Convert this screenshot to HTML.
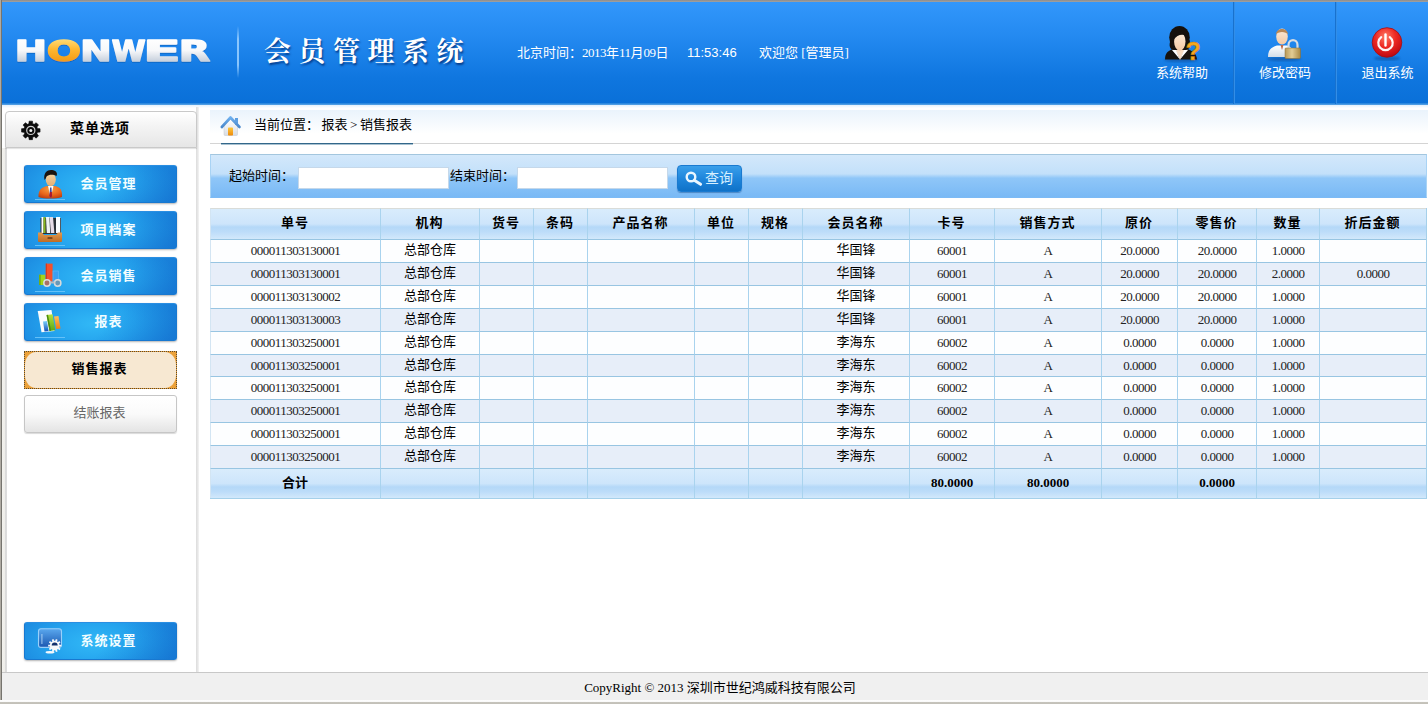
<!DOCTYPE html>
<html lang="zh-CN">
<head>
<meta charset="utf-8">
<title>会员管理系统</title>
<style>
*{box-sizing:border-box;margin:0;padding:0}
html,body{width:1428px;height:704px;overflow:hidden;background:#fff}
body{position:relative;font-family:"Liberation Serif","Noto Sans CJK SC",serif;font-size:13px;color:#000}
.abs{position:absolute}
#frame-t{left:0;top:0;width:1428px;height:2px;background:linear-gradient(#8c8c8c,#a2a2a2)}
#frame-l{left:0;top:0;width:2px;height:700px;background:linear-gradient(90deg,#aeaaa2 0,#aeaaa2 50%,#76746e 50%,#76746e 100%)}
#frame-b{left:0;top:700px;width:1428px;height:4px;background:linear-gradient(#ffffff 0,#fafafa 40%,#c6c4bc 55%,#c2c0b8 100%)}
/* header */
#hdr{left:2px;top:2px;width:1426px;height:102px;background:linear-gradient(#3297fb 0%,#2389f0 35%,#0f76df 75%,#0a70d8 100%)}
#hdr-line{left:2px;top:103px;width:1426px;height:2px;background:linear-gradient(#1e80dc,#5ea6e6)}
#sub{left:2px;top:105px;width:1426px;height:5px;background:linear-gradient(#e3f0fc,#ffffff 60%)}
.hsep{top:2px;width:2px;height:102px;background:linear-gradient(90deg,#0b62c0,#3f9df5)}
.htxt{color:#fff;font-size:13px;white-space:nowrap;line-height:16px}
.hbtn{color:#fff;font-size:13px;text-align:center;white-space:nowrap;line-height:16px;letter-spacing:0}
/* sidebar */
#side-border{left:196px;top:107px;width:3px;height:565px;background:linear-gradient(90deg,#dcdcdc,#e6e6e6 50%,#f4f4f4)}
#menuhead{left:5px;top:111px;width:192px;height:37px;border:1px solid #c9c9c9;border-radius:4px 4px 0 0;background:linear-gradient(#ffffff,#f4f4f4 40%,#e6e6e6 100%);box-shadow:0 1px 1px rgba(0,0,0,.12)}
.mbtn{left:24px;width:153px;height:38px;border-radius:3px;background:linear-gradient(135deg,rgba(16,100,200,0) 55%,rgba(14,90,190,.35) 100%),radial-gradient(ellipse 55% 110% at 45% 55%,#31b8f6 0%,#25a4ee 50%,#1b88df 100%);border:1px solid #1878d0;border-top-color:#2a8ee2;box-shadow:0 1px 2px rgba(0,0,0,.3)}
.mbtn span{position:absolute;left:0;top:0;width:100%;padding-left:16px;text-align:center;color:#f2fdff;font-weight:bold;font-size:13px;line-height:36px;letter-spacing:1px;font-family:"Liberation Serif","Noto Sans CJK SC",serif}
/* footer */
#foot{left:2px;top:672px;width:1426px;height:28px;background:#f0f0f0;border-top:1px solid #c8c8c8;text-align:center;font-size:13px;line-height:30px;padding-left:10px}
/* content */
#crumb{left:210px;top:110px;width:1218px;height:34px;background:linear-gradient(#eaf3fc,#ffffff 70%)}
#crumb-line{left:210px;top:143px;width:1218px;height:1px;background:#d4d4d4}
#crumb-ul{left:221px;top:143px;width:192px;height:2px;background:linear-gradient(#33678a 0,#33678a 50%,#a9c2d1 50%,#a9c2d1 100%)}
#search{left:210px;top:154px;width:1217px;height:44px;border:1px solid #a9d3f4;border-top-color:#a3c6de;border-bottom-color:#7cbaf5;background:linear-gradient(#d3e8fb 0%,#c3e0fa 45%,#8fc6f8 55%,#79b9f5 100%)}
.inp{top:167px;height:22px;width:151px;background:#fff;border:1px solid #c5d8ea}
table{border-collapse:collapse;table-layout:fixed}

#grid{border-collapse:separate;border-spacing:0;table-layout:fixed;border-right:1px solid #a5d0ea;border-bottom:1px solid #a5d0ea}
#grid th,#grid td{border-left:1px solid #a9d3ee;border-top:1px solid #98c5e2;text-align:center;overflow:hidden;white-space:nowrap;padding:0}
#grid th{padding-right:1px;height:31px;font-weight:bold;font-size:13px;letter-spacing:1px;line-height:28px;vertical-align:top;font-family:"Liberation Serif","Noto Sans CJK SC",serif;background:linear-gradient(#d9ecfc 0%,#cde5fb 50%,#b4d8f8 60%,#bcdcf9 75%,#d2e8fb 100%)}
#grid td{height:23px;font-size:12px;line-height:20px;color:#222;vertical-align:top}
#grid td.n{padding-top:1px}
#grid td.c{font-size:13px;line-height:20px;color:#000}
#grid tr.o td{background:#fdfeff}
#grid tr.e td{background:#e7eef9}
#grid tr.tot td{height:30px;font-weight:bold;font-size:13px;line-height:27px;color:#000;background:linear-gradient(#d9ecfc 0%,#cde5fb 50%,#b4d8f8 62%,#bcdcf9 78%,#d2e8fb 100%)}
.d{letter-spacing:-.5px}
#grid td.n{font-size:13px;letter-spacing:-.5px}
#grid tr.s td{height:22px;line-height:19px}
#grid th:first-child,#grid td:first-child{border-left-color:#d3e5f3}
#grid th{border-top-color:#d9dcd9}
</style>
</head>
<body>
<div id="hdr" class="abs"></div>
<div id="hdr-line" class="abs"></div>
<div id="sub" class="abs"></div>
<div id="frame-t" class="abs"></div>
<div id="frame-l" class="abs"></div>
<div id="frame-b" class="abs"></div>


<!-- header -->
<svg class="abs" style="left:10px;top:30px" width="212" height="46" viewBox="0 0 212 46">
  <defs>
    <linearGradient id="lgW" gradientUnits="userSpaceOnUse" x1="0" y1="-22" x2="0" y2="1"><stop offset="0" stop-color="#ffffff"/><stop offset=".5" stop-color="#f7f8fa"/><stop offset="1" stop-color="#c4cedb"/></linearGradient>
    <linearGradient id="lgO" gradientUnits="userSpaceOnUse" x1="0" y1="-22" x2="0" y2="1"><stop offset="0" stop-color="#ffdc78"/><stop offset=".45" stop-color="#fdb730"/><stop offset="1" stop-color="#f29a14"/></linearGradient>
    <filter id="fsh" x="-5%" y="-20%" width="110%" height="150%"><feDropShadow dx="0" dy="1" stdDeviation="0.7" flood-color="#0a4fa0" flood-opacity=".45"/></filter>
  </defs>
  <g filter="url(#fsh)" font-family="'DejaVu Sans','Liberation Sans',sans-serif" font-weight="bold" font-size="28" stroke-linejoin="round">
    <text transform="translate(4.75,31) scale(1.375,1)" x="0" y="0" fill="url(#lgW)" stroke="url(#lgW)" stroke-width="1.4">H</text>
    <text transform="translate(36.86,31) scale(1.441,1)" x="0" y="0" fill="url(#lgO)" stroke="url(#lgO)" stroke-width="1.4">O</text>
    <text transform="translate(70.32,31) scale(1.340,1)" x="0" y="0" fill="url(#lgW)" stroke="url(#lgW)" stroke-width="1.4">N</text>
    <text transform="translate(101.80,31) scale(1.097,1)" x="0" y="0" fill="url(#lgW)" stroke="url(#lgW)" stroke-width="1.4">W</text>
    <text transform="translate(133.30,31) scale(1.950,1)" x="0" y="0" fill="url(#lgW)" stroke="url(#lgW)" stroke-width="1.4">E</text>
    <text transform="translate(168.68,31) scale(1.460,1)" x="0" y="0" fill="url(#lgW)" stroke="url(#lgW)" stroke-width="1.4">R</text>
  </g>
</svg>
<div class="abs" style="left:237px;top:26px;width:2px;height:52px;background:linear-gradient(rgba(120,185,250,0),rgba(150,205,255,.9) 25%,rgba(150,205,255,.9) 75%,rgba(120,185,250,0))"></div>
<div class="abs" id="title" style="left:264px;top:32px;font-family:'Liberation Serif','Noto Serif CJK SC',serif;font-weight:bold;font-size:27px;line-height:40px;letter-spacing:7.500px;color:#fff;text-shadow:1px 2px 2px rgba(0,40,110,.75);white-space:nowrap">会员管理系统</div>
<div class="abs htxt" id="h-time" style="left:517px;top:45px">北京时间：<span class="d">2013</span>年<span class="d">11</span>月<span class="d">09</span>日</div>
<div class="abs htxt" id="h-clock" style="left:687px;top:45px;font-family:'Liberation Sans',sans-serif">11:53:46</div>
<div class="abs htxt" id="h-wel" style="left:759px;top:45px">欢迎您 [管理员]</div>
<div class="abs hsep" style="left:1233px"></div>
<div class="abs hsep" style="left:1335px"></div>
<div class="abs hbtn" id="hb1" style="left:1131px;top:65px;width:102px">系统帮助</div>
<div class="abs hbtn" id="hb2" style="left:1235px;top:65px;width:100px">修改密码</div>
<div class="abs hbtn" id="hb3" style="left:1347px;top:65px;width:81px">退出系统</div>
<div id="side-border" class="abs"></div>
<div class="abs" style="left:2px;top:148px;width:5px;height:524px;background:linear-gradient(90deg,#f2f1ed 0,#efeeea 50%,#d9d9d9 60%,#dedede 100%)"></div>
<div id="menuhead" class="abs"></div>
<div id="foot" class="abs">CopyRight © 2013 深圳市世纪鸿威科技有限公司</div>
<div id="crumb" class="abs"></div>
<div id="crumb-line" class="abs"></div>
<div id="crumb-ul" class="abs"></div>
<div id="search" class="abs"></div>
<!-- sidebar -->
<div class="abs" id="mh-t" style="left:6px;top:111px;width:191px;height:37px;text-align:center;font-weight:bold;font-size:14px;line-height:36px;font-family:'Liberation Serif','Noto Sans CJK SC',serif;padding-right:3px;letter-spacing:1px">菜单选项</div>
<div class="abs mbtn" style="top:165px"><span>会员管理</span></div>
<div class="abs mbtn" style="top:211px"><span>项目档案</span></div>
<div class="abs mbtn" style="top:257px"><span>会员销售</span></div>
<div class="abs mbtn" style="top:303px"><span>报表</span></div>
<div class="abs" id="selbtn" style="left:24px;top:351px;width:153px;height:38px;background:#eba13a;outline:1px dotted #5a4a30;outline-offset:-1px"><div style="position:absolute;left:1px;top:1px;right:1px;bottom:1px;background:#f7e8d2;border-radius:11px/13px"></div><span style="position:absolute;left:0;top:0;width:100%;text-align:center;font-weight:bold;font-size:13px;letter-spacing:1px;line-height:36px;padding-right:2px;font-family:'Liberation Serif','Noto Sans CJK SC',serif">销售报表</span></div>
<div class="abs" id="graybtn" style="left:24px;top:395px;width:153px;height:38px;border:1px solid #c6c6c6;border-radius:3px;background:linear-gradient(#ffffff 0%,#fafafa 50%,#e4e4e4 100%);box-shadow:0 1px 1px rgba(0,0,0,.15);text-align:center;color:#666;font-size:13px;line-height:34px;padding-right:2px">结账报表</div>
<div class="abs mbtn" style="top:622px"><span>系统设置</span></div>

<!-- content -->
<div class="abs" id="cr-t" style="left:254px;top:117px;font-size:13px;line-height:16px;white-space:nowrap;word-spacing:-.7px">当前位置： 报表 &gt; 销售报表</div>
<div class="abs" id="s-l1" style="left:229px;top:168px;font-size:13px;line-height:16px;white-space:nowrap">起始时间：</div>
<div class="abs inp" style="left:298px"></div>
<div class="abs" id="s-l2" style="left:450px;top:168px;font-size:13px;line-height:16px;white-space:nowrap">结束时间：</div>
<div class="abs inp" style="left:517px"></div>
<div class="abs" id="qbtn" style="left:677px;top:165px;width:65px;height:27px;border-radius:4px;background:linear-gradient(#3a9fea 0%,#1f86dc 50%,#0f72c8 100%);border:1px solid #1a7ad0;box-shadow:0 1px 1px rgba(0,60,130,.4)"><span style="position:absolute;left:27px;top:4px;font-size:14px;line-height:18px;color:#d6f0ff;white-space:nowrap;letter-spacing:0">查询</span></div>
<table class="abs" id="grid" style="left:210px;top:208px;width:1217px">
<colgroup><col style="width:170px"><col style="width:99px"><col style="width:54px"><col style="width:54px"><col style="width:107px"><col style="width:54px"><col style="width:54px"><col style="width:107px"><col style="width:85px"><col style="width:107px"><col style="width:76px"><col style="width:79px"><col style="width:63px"><col style="width:107px"></colgroup>
<thead><tr><th>单号</th><th>机构</th><th>货号</th><th>条码</th><th>产品名称</th><th>单位</th><th>规格</th><th>会员名称</th><th>卡号</th><th>销售方式</th><th>原价</th><th>零售价</th><th>数量</th><th>折后金额</th></tr></thead>
<tbody>
<tr class="o"><td class="n">000011303130001</td><td class="c">总部仓库</td><td class="n"></td><td class="n"></td><td class="n"></td><td class="n"></td><td class="n"></td><td class="c">华国锋</td><td class="n">60001</td><td class="n">A</td><td class="n">20.0000</td><td class="n">20.0000</td><td class="n">1.0000</td><td class="n"></td></tr>
<tr class="e"><td class="n">000011303130001</td><td class="c">总部仓库</td><td class="n"></td><td class="n"></td><td class="n"></td><td class="n"></td><td class="n"></td><td class="c">华国锋</td><td class="n">60001</td><td class="n">A</td><td class="n">20.0000</td><td class="n">20.0000</td><td class="n">2.0000</td><td class="n">0.0000</td></tr>
<tr class="o"><td class="n">000011303130002</td><td class="c">总部仓库</td><td class="n"></td><td class="n"></td><td class="n"></td><td class="n"></td><td class="n"></td><td class="c">华国锋</td><td class="n">60001</td><td class="n">A</td><td class="n">20.0000</td><td class="n">20.0000</td><td class="n">1.0000</td><td class="n"></td></tr>
<tr class="e"><td class="n">000011303130003</td><td class="c">总部仓库</td><td class="n"></td><td class="n"></td><td class="n"></td><td class="n"></td><td class="n"></td><td class="c">华国锋</td><td class="n">60001</td><td class="n">A</td><td class="n">20.0000</td><td class="n">20.0000</td><td class="n">1.0000</td><td class="n"></td></tr>
<tr class="o"><td class="n">000011303250001</td><td class="c">总部仓库</td><td class="n"></td><td class="n"></td><td class="n"></td><td class="n"></td><td class="n"></td><td class="c">李海东</td><td class="n">60002</td><td class="n">A</td><td class="n">0.0000</td><td class="n">0.0000</td><td class="n">1.0000</td><td class="n"></td></tr>
<tr class="e s"><td class="n">000011303250001</td><td class="c">总部仓库</td><td class="n"></td><td class="n"></td><td class="n"></td><td class="n"></td><td class="n"></td><td class="c">李海东</td><td class="n">60002</td><td class="n">A</td><td class="n">0.0000</td><td class="n">0.0000</td><td class="n">1.0000</td><td class="n"></td></tr>
<tr class="o"><td class="n">000011303250001</td><td class="c">总部仓库</td><td class="n"></td><td class="n"></td><td class="n"></td><td class="n"></td><td class="n"></td><td class="c">李海东</td><td class="n">60002</td><td class="n">A</td><td class="n">0.0000</td><td class="n">0.0000</td><td class="n">1.0000</td><td class="n"></td></tr>
<tr class="e"><td class="n">000011303250001</td><td class="c">总部仓库</td><td class="n"></td><td class="n"></td><td class="n"></td><td class="n"></td><td class="n"></td><td class="c">李海东</td><td class="n">60002</td><td class="n">A</td><td class="n">0.0000</td><td class="n">0.0000</td><td class="n">1.0000</td><td class="n"></td></tr>
<tr class="o"><td class="n">000011303250001</td><td class="c">总部仓库</td><td class="n"></td><td class="n"></td><td class="n"></td><td class="n"></td><td class="n"></td><td class="c">李海东</td><td class="n">60002</td><td class="n">A</td><td class="n">0.0000</td><td class="n">0.0000</td><td class="n">1.0000</td><td class="n"></td></tr>
<tr class="e"><td class="n">000011303250001</td><td class="c">总部仓库</td><td class="n"></td><td class="n"></td><td class="n"></td><td class="n"></td><td class="n"></td><td class="c">李海东</td><td class="n">60002</td><td class="n">A</td><td class="n">0.0000</td><td class="n">0.0000</td><td class="n">1.0000</td><td class="n"></td></tr>
<tr class="tot"><td style="padding-right:1px">合计</td><td></td><td></td><td></td><td></td><td></td><td></td><td></td><td>80.0000</td><td>80.0000</td><td></td><td>0.0000</td><td></td><td></td></tr>
</tbody></table>


<!-- icons -->
<svg class="abs" id="icons" style="left:0;top:0;pointer-events:none" width="1428" height="704" viewBox="0 0 1428 704">
<defs>
  <radialGradient id="gRed" cx=".45" cy=".3" r=".75"><stop offset="0" stop-color="#ff7a66"/><stop offset=".45" stop-color="#ee2a24"/><stop offset=".85" stop-color="#c80d14"/><stop offset="1" stop-color="#9c0a10"/></radialGradient>
  <linearGradient id="gGold" x1="0" y1="0" x2="1" y2="0"><stop offset="0" stop-color="#b89858"/><stop offset=".45" stop-color="#e2cc94"/><stop offset="1" stop-color="#a88844"/></linearGradient>
  <linearGradient id="gFace" x1="0" y1="0" x2="0" y2="1"><stop offset="0" stop-color="#fdebd8"/><stop offset="1" stop-color="#f3c9a4"/></linearGradient>
  <linearGradient id="gFace2" x1="0" y1="0" x2="0" y2="1"><stop offset="0" stop-color="#f6d6a4"/><stop offset="1" stop-color="#e2ad74"/></linearGradient>
  <radialGradient id="gOr" cx=".5" cy=".25" r=".8"><stop offset="0" stop-color="#f8a040"/><stop offset=".6" stop-color="#e8641a"/><stop offset="1" stop-color="#b83c10"/></radialGradient>
  <linearGradient id="gShirt" x1="0" y1="0" x2="0" y2="1"><stop offset="0" stop-color="#ffffff"/><stop offset="1" stop-color="#d4dde8"/></linearGradient>
  <linearGradient id="gBox" x1="0" y1="0" x2="0" y2="1"><stop offset="0" stop-color="#e09a50"/><stop offset="1" stop-color="#c06c24"/></linearGradient>
  <linearGradient id="gMon" x1="0" y1="0" x2="0" y2="1"><stop offset="0" stop-color="#5aa8ee"/><stop offset="1" stop-color="#1a56b0"/></linearGradient>
  <linearGradient id="gRoof" x1="0" y1="0" x2="0" y2="1"><stop offset="0" stop-color="#6fb0ee"/><stop offset="1" stop-color="#4a88cc"/></linearGradient>
  <linearGradient id="gWall" x1="0" y1="0" x2="0" y2="1"><stop offset="0" stop-color="#ffffff"/><stop offset="1" stop-color="#d8dce2"/></linearGradient>
  <linearGradient id="gDoor" x1="0" y1="0" x2="0" y2="1"><stop offset="0" stop-color="#ffc83a"/><stop offset="1" stop-color="#ee8a0a"/></linearGradient>
  <linearGradient id="gGreen" x1="0" y1="0" x2="0" y2="1"><stop offset="0" stop-color="#b8e23a"/><stop offset="1" stop-color="#5aa818"/></linearGradient>
  <linearGradient id="gOrange" x1="0" y1="0" x2="0" y2="1"><stop offset="0" stop-color="#ffc060"/><stop offset="1" stop-color="#f07a10"/></linearGradient>
  <linearGradient id="gBlueBar" x1="0" y1="0" x2="0" y2="1"><stop offset="0" stop-color="#7cd0fa"/><stop offset="1" stop-color="#1450b8"/></linearGradient>
  <filter id="blur1"><feGaussianBlur stdDeviation="0.8"/></filter>
</defs>

<!-- help: woman + question -->
<g>
  <ellipse cx="1181" cy="60" rx="17" ry="2" fill="#083c80" opacity=".45" filter="url(#blur1)"/>
  <path d="M1165 59.500 C1165 53 1168 50.500 1174 48.500 L1186 48.500 C1192 50.500 1196.500 53 1197 59.500 Z" fill="#17130f"/>
  <path d="M1174 47 L1180 60 L1186 47 Z" fill="#f8dcc4"/>
  <path d="M1172 50 L1175 47.500 L1179.600 59 Z M1188 50 L1185 47.500 L1180.400 59 Z" fill="#ffffff"/>
  <ellipse cx="1179.500" cy="37.500" rx="10.300" ry="11.500" fill="#15100c"/>
  <path d="M1170.500 40 C1168.500 46 1170 49.500 1173.500 50 L1186 50 C1189.500 49.500 1191 45 1189.500 40 Z" fill="#15100c"/>
  <ellipse cx="1179.800" cy="41.500" rx="5.700" ry="9.300" fill="url(#gFace)"/>
  <path d="M1173.500 40 C1173 32 1181 28.500 1186.500 36 C1182 33.500 1177 35 1173.500 40 Z" fill="#15100c"/>
  <text x="1185.500" y="59.500" font-family="'Liberation Sans',sans-serif" font-weight="bold" font-size="25" fill="#f6a820" stroke="#c47a0a" stroke-width=".5">?</text>
</g>

<!-- change password: man + lock -->
<g>
  <ellipse cx="1284" cy="59" rx="17" ry="2" fill="#083c80" opacity=".45" filter="url(#blur1)"/>
  <path d="M1268 57 C1268 50 1271 47.500 1277 45.500 L1287 45.500 C1292 47.500 1295 50 1295 57 Z" fill="url(#gShirt)"/>
  <path d="M1280.500 45 L1282 50 L1283.500 45 Z" fill="#c06848"/>
  <ellipse cx="1282" cy="36.500" rx="5.800" ry="8" fill="url(#gFace)"/>
  <path d="M1276 34.500 C1276 27 1288 27 1288 34.500 C1286 31 1278 31 1276 34.500 Z" fill="#b88858"/>
  <path d="M1288.500 49 L1288.500 45 C1288.500 38.500 1297.500 38.500 1297.500 45 L1297.500 49" fill="none" stroke="#d8dce2" stroke-width="2.200"/>
  <rect x="1285" y="48" width="15.500" height="10.500" rx="1" fill="url(#gGold)" stroke="#8a6c30" stroke-width=".5"/>
</g>

<!-- exit: red power -->
<g>
  <ellipse cx="1387" cy="58.500" rx="13" ry="2" fill="#083c80" opacity=".45" filter="url(#blur1)"/>
  <circle cx="1387" cy="42.500" r="14.800" fill="url(#gRed)" stroke="#a50d14" stroke-width=".8"/>
  <path d="M1381.200 37.200 A7.200 7.200 0 1 0 1389.800 37.200" fill="none" stroke="#fff" stroke-width="2.200" stroke-linecap="round" opacity=".95"/>
  <path d="M1385.500 34.500 L1385.500 45.500" fill="none" stroke="#fff" stroke-width="2.400" stroke-linecap="round"/>
</g>

<!-- gear in menu head -->
<path d="M37.54 128.50 L40.05 128.71 L40.05 132.09 L37.54 132.30 L36.91 133.82 L38.53 135.74 L36.14 138.13 L34.22 136.51 L32.70 137.14 L32.49 139.65 L29.11 139.65 L28.90 137.14 L27.38 136.51 L25.46 138.13 L23.07 135.74 L24.69 133.82 L24.06 132.30 L21.55 132.09 L21.55 128.71 L24.06 128.50 L24.69 126.98 L23.07 125.06 L25.46 122.67 L27.38 124.29 L28.90 123.66 L29.11 121.15 L32.49 121.15 L32.70 123.66 L34.22 124.29 L36.14 122.67 L38.53 125.06 L36.91 126.98Z" fill="#0c0c0c" stroke="#0c0c0c" stroke-width=".6" stroke-linejoin="round"/>
<circle cx="30.800" cy="130.400" r="4.100" fill="none" stroke="#cfcfcf" stroke-width="1.200"/>
<circle cx="30.800" cy="130.400" r="1.500" fill="#f4f4f4"/>

<!-- home -->
<g>
  <path d="M224 126 L230.500 119.500 L237.500 126 L237.500 134.500 Q237.500 135.500 236.500 135.500 L225 135.500 Q224 135.500 224 134.500 Z" fill="url(#gWall)" stroke="#c4c8cf" stroke-width=".5"/>
  <rect x="235" y="118" width="3" height="7" fill="#5f9fe0"/>
  <path d="M221.800 127 L230.500 117.500 L239.500 127" fill="none" stroke="url(#gRoof)" stroke-width="2.600" stroke-linecap="round" stroke-linejoin="round"/>
  <rect x="228" y="127.500" width="5" height="8" rx=".8" fill="url(#gDoor)"/>
</g>

<!-- sidebar icon 1: member -->
<g>
  <path d="M38.500 197 C38 190 42 187 47 186 L55 186 C60 187 62.500 190 62 197 C56 199 44 199 38.500 197 Z" fill="url(#gOr)"/>
  <path d="M48 186 L50.700 198 L53.500 186 Z" fill="#fff"/>
  <path d="M50 187.500 L51.500 187.500 L52 196 L50.700 198 L49.500 196 Z" fill="#3a4aa0"/>
  <path d="M50 192 L51.800 192 L52 196 L50.700 198 L49.500 196 Z" fill="#b0182a"/>
  <ellipse cx="50.800" cy="179.500" rx="5" ry="6.800" fill="url(#gFace2)"/>
  <path d="M44.500 180 C43 172 48 169.500 52 170 C56 170.500 58 173 56.500 176 C54 174.500 49 174 46.500 176.500 C46 178 45.500 179 44.500 180 Z" fill="#1a1410"/>
  <rect x="35" y="199" width="30" height="1" fill="#6cc4fa" opacity=".9"/>
</g>

<!-- sidebar icon 2: archive box -->
<g>
  <rect x="40.500" y="218" width="20.500" height="16" fill="#2a3038"/>
  <rect x="41.500" y="217" width="2" height="16" fill="#fff"/><rect x="43.500" y="217" width="2" height="16" fill="#8ab820"/>
  <rect x="46.800" y="217" width="3.400" height="16" fill="#f0f4f4" transform="skewX(3)" style="transform-origin:48px 233px"/>
  <rect x="51" y="217" width="3.400" height="16" fill="#e6dce8" transform="skewX(5)" style="transform-origin:52px 233px"/>
  <rect x="56" y="217" width="4.200" height="16" fill="#fafcff"/>
  <path d="M38 232.500 L42 232.500 L44 235 L56 235 L58 232.500 L62 232.500 L62 241 Q62 242 61 242 L39 242 Q38 242 38 241 Z" fill="url(#gBox)"/>
  <rect x="47.500" y="237.300" width="5" height="1.400" rx=".5" fill="#6a3810"/>
  <rect x="35" y="245" width="30" height="1" fill="#6cc4fa" opacity=".9"/>
</g>

<!-- sidebar icon 3: chart + glasses -->
<g>
  <rect x="39.200" y="274.700" width="6" height="10.300" fill="#a4d418"/>
  <rect x="39.200" y="274.700" width="1.500" height="10.300" fill="#6ea80e"/>
  <rect x="45.800" y="263.600" width="6.800" height="18" fill="#f4502c"/>
  <rect x="45.800" y="263.600" width="1.200" height="18" fill="#d83a1c"/>
  <rect x="53" y="271" width="5.500" height="10.500" fill="#3aa0f4" stroke="#66b8f8" stroke-width=".6"/>
  <circle cx="47" cy="283" r="3.200" fill="#a87068" stroke="#d8dcdc" stroke-width="1.500"/>
  <circle cx="57.700" cy="283" r="3.200" fill="#6898b8" stroke="#d8dcdc" stroke-width="1.500"/>
  <rect x="50.500" y="281.500" width="4" height="2" fill="#b8bcc0"/>
  <rect x="35" y="291" width="30" height="1" fill="#6cc4fa" opacity=".9"/>
</g>

<!-- sidebar icon 4: report -->
<g>
  <path d="M37.700 311 L51.500 310 L54.500 331 L41.500 332.300 Z" fill="#fbfcfd"/>
  <path d="M43 321.500 L47 321 L48.500 331 L44.500 331.500 Z" fill="url(#gBlueBar)"/>
  <path d="M46.500 315 L52.500 314.300 L55.300 330.300 L49.500 331 Z" fill="url(#gGreen)"/>
  <path d="M46.500 315 L48 314.800 L51 330.800 L49.500 331 Z" fill="#4a8a10"/>
  <path d="M54 316.500 L58.500 316 L60.500 328.500 L56.200 329 Z" fill="url(#gOrange)"/>
  <rect x="35" y="337" width="30" height="1" fill="#6cc4fa" opacity=".9"/>
</g>

<!-- sidebar icon 5: settings -->
<g>
  <ellipse cx="50" cy="652.300" rx="4.500" ry="1.300" fill="#f4f8fc"/>
  <rect x="38.500" y="628.800" width="23" height="18.600" rx="2.500" fill="url(#gMon)" stroke="#9ad0fa" stroke-width="1.100"/>
  <rect x="41.300" y="634" width="1.200" height="10" fill="#b8dcfa" opacity=".7"/>
  <path d="M59.41 644.67 L61.24 644.73 L61.24 646.47 L59.41 646.53 L59.06 647.62 L60.50 648.74 L59.48 650.15 L57.96 649.12 L57.04 649.79 L57.55 651.55 L55.90 652.09 L55.27 650.37 L54.13 650.37 L53.50 652.09 L51.85 651.55 L52.36 649.79 L51.44 649.12 L49.92 650.15 L48.90 648.74 L50.34 647.62 L49.99 646.53 L48.16 646.47 L48.16 644.73 L49.99 644.67 L50.34 643.58 L48.90 642.46 L49.92 641.05 L51.44 642.08 L52.36 641.41 L51.85 639.65 L53.50 639.11 L54.13 640.83 L55.27 640.83 L55.90 639.11 L57.55 639.65 L57.04 641.41 L57.96 642.08 L59.48 641.05 L60.50 642.46 L59.06 643.58Z" fill="#f6f8fa"/>
  <path d="M51.700 645.600 A3 3 0 0 1 57.700 645.600 Z" fill="#12306c"/>
</g>

<!-- magnifier -->
<g>
  <circle cx="691" cy="177" r="4.300" fill="none" stroke="#eaf6ff" stroke-width="2.400"/>
  <path d="M694.300 180.300 L700.600 184.300" stroke="#eaf6ff" stroke-width="3" stroke-linecap="round"/>
</g>
</svg>
</body>
</html>
